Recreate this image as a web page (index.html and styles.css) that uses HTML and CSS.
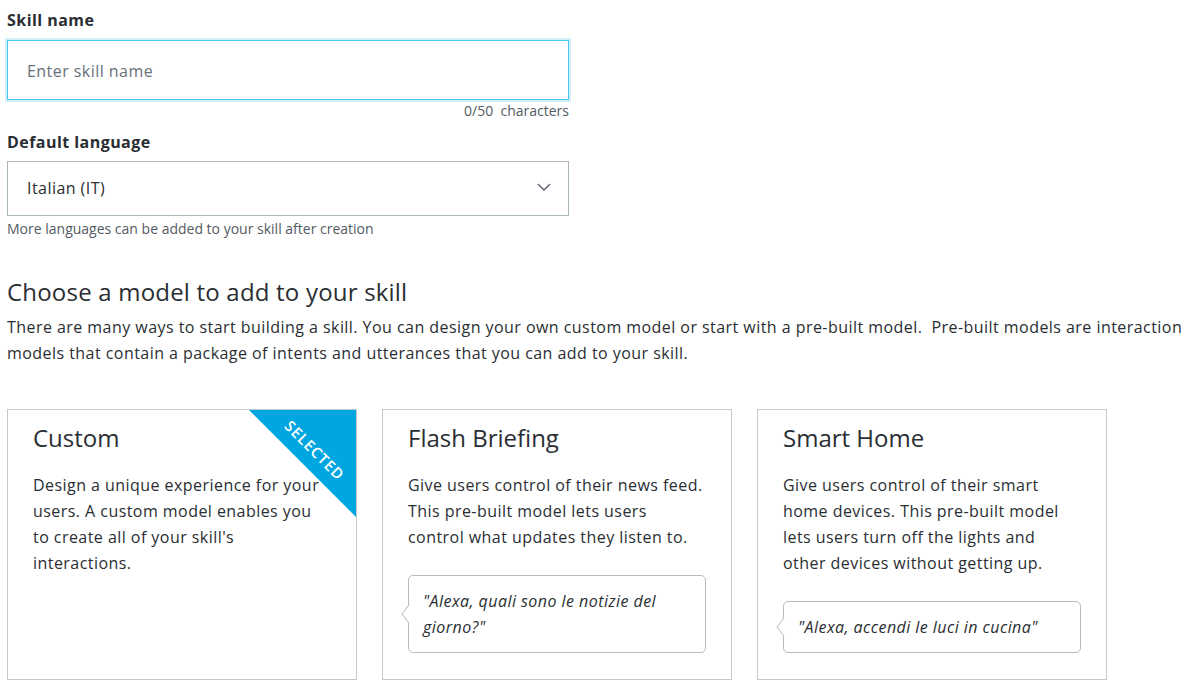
FILE: index.html
```html
<!DOCTYPE html>
<html lang="en">
<head>
<meta charset="utf-8">
<title>Create skill</title>
<link rel="stylesheet" href="styles.css">
</head>
<body>
<main class="page">
  <section class="form">
    <label class="label" for="skill-name">Skill name</label>
    <div class="input-wrap">
      <input id="skill-name" class="input" type="text" placeholder="Enter skill name">
    </div>
    <div class="counter">0/50&nbsp; characters</div>

    <div class="label label-lang">Default language</div>
    <div class="select">
      <span class="select-value">Italian (IT)</span>
      <svg class="chevron" width="14" height="8" viewBox="0 0 14 8"><polyline points="1,1 7,7 13,1" fill="none" stroke="#545b64" stroke-width="1.3"/></svg>
    </div>
    <div class="help">More languages can be added to your skill after creation</div>
  </section>

  <h2 class="heading">Choose a model to add to your skill</h2>
  <p class="intro">There are many ways to start building a skill. You can design your own custom model or start with a pre-built model. &nbsp;Pre-built models are interaction models that contain a package of intents and utterances that you can add to your skill.</p>

  <div class="cards">
    <div class="card">
      <div class="ribbon"><span class="ribbon-text">SELECTED</span></div>
      <h3 class="card-title">Custom</h3>
      <p class="card-desc">Design a unique experience for your users. A custom model enables you to create all of your skill's interactions.</p>
    </div>
    <div class="card">
      <h3 class="card-title">Flash Briefing</h3>
      <p class="card-desc">Give users control of their news feed. This pre-built model lets users control what updates they listen to.</p>
      <div class="bubble">"Alexa, quali sono le notizie del giorno?"</div>
    </div>
    <div class="card">
      <h3 class="card-title">Smart Home</h3>
      <p class="card-desc">Give users control of their smart home devices. This pre-built model lets users turn off the lights and other devices without getting up.</p>
      <div class="bubble">"Alexa, accendi le luci in cucina"</div>
    </div>
  </div>
</main>
</body>
</html>
```

FILE: styles.css
```css
* { box-sizing: border-box; }
html, body { margin: 0; padding: 0; background: #fff; }
body {
  font-family: "Open Sans", "Noto Sans", sans-serif;
  color: #2a2e33;
  font-size: 16px;
}
.page { padding: 10px 0 0 7px; }
.form { width: 562px; display: flex; flex-direction: column; }
.label {
  font-weight: 700;
  font-size: 16px;
  line-height: 20px;
  letter-spacing: 0.45px;
  color: #2a2e33;
}
.input-wrap { margin-top: 10px; }
.input {
  display: block;
  width: 100%;
  height: 60px;
  border: 1px solid #44c8f5;
  box-shadow: 0 0 0 2px #d2eef9;
  padding: 1px 19px 0;
  font-family: inherit;
  font-size: 16px;
  letter-spacing: 0.45px;
  color: #2a2e33;
  outline: none;
  background: #fff;
}
.input::placeholder { color: #687078; }
.counter {
  margin-top: 2px;
  text-align: right;
  font-size: 14px;
  line-height: 18px;
  color: #545b64;
}
.label-lang { margin-top: 12px; }
.select {
  margin-top: 9px;
  height: 55px;
  border: 1px solid #aab7b8;
  display: flex;
  align-items: center;
  justify-content: space-between;
  padding: 0 17px 0 19px;
}
.select-value { font-size: 16px; letter-spacing: 0.45px; color: #2a2e33; margin-top: -2px; }
.chevron { display: block; margin-top: -4px; }
.help {
  margin-top: 4px;
  font-size: 14px;
  line-height: 18px;
  color: #545b64;
}
.heading {
  margin: 38px 0 0;
  font-size: 24px;
  line-height: 32px;
  font-weight: 400;
  letter-spacing: 0.2px;
  color: #2a2e33;
}
.intro {
  margin: 6px 0 0;
  font-size: 16px;
  line-height: 26px;
  letter-spacing: 0.45px;
  color: #2a2e33;
}
.cards {
  margin-top: 43px;
  display: flex;
  gap: 25px;
  align-items: stretch;
}
.card {
  position: relative;
  width: 350px;
  border: 1px solid #c6c9ca;
  padding: 12px 25px 26px;
  display: flex;
  flex-direction: column;
  overflow: hidden;
}
.card-title {
  margin: 0;
  font-size: 24px;
  line-height: 32px;
  font-weight: 400;
  color: #2a2e33;
}
.card-desc {
  margin: 18px 0 0;
  font-size: 16px;
  line-height: 26px;
  letter-spacing: 0.45px;
}
.bubble {
  position: relative;
  margin-top: 25px;
  border: 1px solid #b4bcbe;
  border-radius: 5px;
  padding: 12px 14px;
  font-style: italic;
  font-size: 16px;
  line-height: 26px;
  letter-spacing: 0.45px;
  background: #fff;
}
.bubble::before {
  content: "";
  position: absolute;
  left: -7px;
  top: 50%;
  width: 13px;
  height: 13px;
  margin-top: -7px;
  background: #fff;
  border-left: 1px solid #b4bcbe;
  border-bottom: 1px solid #b4bcbe;
  transform: scaleX(0.75) rotate(45deg);
}
.ribbon {
  position: absolute;
  top: 0;
  right: 0;
  width: 107px;
  height: 107px;
  background: #00a6df;
  clip-path: polygon(0 0, 100% 0, 100% 100%);
}
.ribbon-text {
  position: absolute;
  left: -9px;
  top: 31px;
  width: 150px;
  height: 18px;
  line-height: 18px;
  text-align: center;
  color: #fff;
  font-size: 15px;
  font-weight: 600;
  letter-spacing: 0.8px;
  transform: rotate(45deg);
}
```
